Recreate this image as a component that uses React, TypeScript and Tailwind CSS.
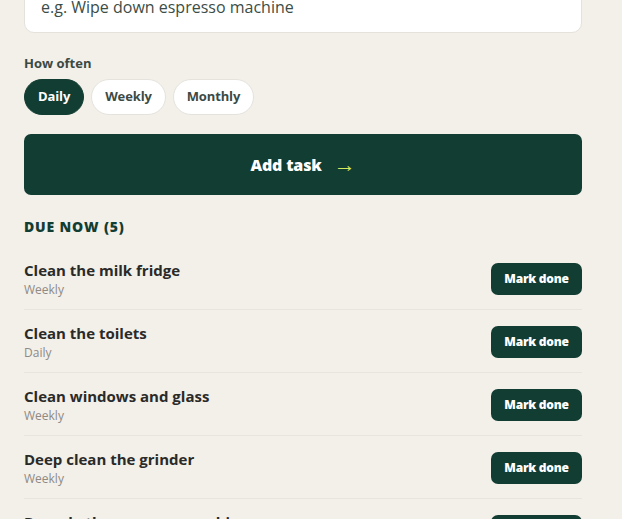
import { useState } from 'react';

type Task = { id: number; title: string; freq: string };

const TASKS: Task[] = [
  { id: 1, title: 'Clean the milk fridge', freq: 'Weekly' },
  { id: 2, title: 'Clean the toilets', freq: 'Daily' },
  { id: 3, title: 'Clean windows and glass', freq: 'Weekly' },
  { id: 4, title: 'Deep clean the grinder', freq: 'Weekly' },
  { id: 5, title: 'Descale the espresso machine', freq: 'Monthly' },
];

const FREQS = ['Daily', 'Weekly', 'Monthly'];

export default function App() {
  const [freq, setFreq] = useState('Daily');

  return (
    <div className="h-screen overflow-hidden bg-[#f3efe9] font-['Open_Sans',sans-serif]">
      <div className="pl-6 pr-10 -mt-[20px]">
        {/* Task input */}
        <input
          type="text"
          placeholder="e.g. Wipe down espresso machine"
          className="w-full h-[53px] rounded-[10px] border border-[#e4e2dc] bg-white px-4 text-[16px] text-[#1f3a33] placeholder:text-[#3c4d47] outline-none"
        />

        {/* Frequency */}
        <div className="mt-[21px]">
          <p className="text-[13px] font-bold text-[#3a4a43] leading-[18px]">How often</p>
          <div className="mt-[7px] flex gap-[7px]">
            {FREQS.map((f) => (
              <button
                key={f}
                onClick={() => setFreq(f)}
                className={`h-[36px] rounded-full px-[13px] text-[13px] font-bold tracking-[-0.01em] ${
                  freq === f
                    ? 'bg-[#123d33] text-white border border-[#123d33]'
                    : 'bg-white text-[#3c4a45] border border-[#e5e3dd]'
                }`}
              >
                {f}
              </button>
            ))}
          </div>
        </div>

        {/* Add button */}
        <button className="mt-[19px] flex h-[61px] w-full items-center justify-center gap-[12px] rounded-[7px] bg-[#123d33] text-[16px] font-extrabold tracking-[-0.01em] text-white">
          <span>Add task</span>
          <span className="-mt-[3px] text-[#d6e85c] text-[22px] font-light leading-none">→</span>
        </button>

        {/* Due list */}
        <h2 className="mt-[22px] text-[14px] font-extrabold leading-[20px] tracking-[0.06em] text-[#123d33]">
          DUE NOW (5)
        </h2>

        <ul className="mt-[10px]">
          {TASKS.map((t) => (
            <li
              key={t.id}
              className="flex items-center justify-between border-b border-[#e9e4dc] pt-[13px] pb-[11px]"
            >
              <div>
                <p className="text-[15px] font-bold leading-[20px] text-[#2a2a28]">{t.title}</p>
                <p className="mt-[2px] text-[12px] leading-[16px] text-[#8e8a84]">{t.freq}</p>
              </div>
              <button className="h-[32px] w-[91px] rounded-[7px] bg-[#123d33] text-[12px] font-extrabold tracking-[-0.02em] text-white">
                Mark done
              </button>
            </li>
          ))}
        </ul>
      </div>
    </div>
  );
}
